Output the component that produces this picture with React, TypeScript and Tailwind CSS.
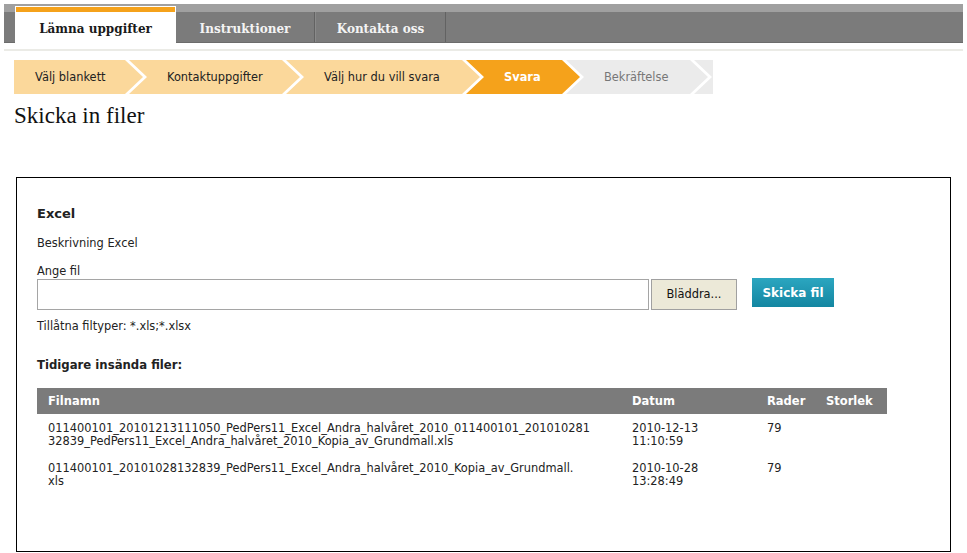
import React from 'react';

const verdana = "font-['DejaVu_Sans',Verdana,sans-serif]";
const georgia = "font-['DejaVu_Serif',Georgia,serif]";

type Step = { label: string; width: string; tone: 'done' | 'active' | 'todo'; first?: boolean };

const steps: Step[] = [
  { label: 'Välj blankett', width: 'w-[129px]', tone: 'done', first: true },
  { label: 'Kontaktuppgifter', width: 'w-[171px]', tone: 'done' },
  { label: 'Välj hur du vill svara', width: 'w-[194px]', tone: 'done' },
  { label: 'Svara', width: 'w-[114px]', tone: 'active' },
  { label: 'Bekräftelse', width: 'w-[142px]', tone: 'todo' },
];

const files = [
  {
    name: [
      '011400101_20101213111050_PedPers11_Excel_Andra_halvåret_2010_011400101_201010281',
      '32839_PedPers11_Excel_Andra_halvåret_2010_Kopia_av_Grundmall.xls',
    ],
    date: ['2010-12-13', '11:10:59'],
    rows: '79',
  },
  {
    name: ['011400101_20101028132839_PedPers11_Excel_Andra_halvåret_2010_Kopia_av_Grundmall.', 'xls'],
    date: ['2010-10-28', '13:28:49'],
    rows: '79',
  },
];

const toneClass = {
  done: 'bg-[#fbd89b] text-[#222]',
  active: 'bg-[#f5a21b] text-white font-bold',
  todo: 'bg-[#ebebeb] text-[#777]',
};

const Breadcrumb: React.FC = () => (
  <div className={`flex ml-[14px] mt-[9px] h-[34px] text-[11.4px] ${verdana}`}>
    {steps.map((s, i) => (
      <div
        key={i}
        className={`${s.width} ${toneClass[s.tone]} h-full flex items-center pt-[1px] shrink-0 ${
          s.first
            ? 'pl-[21px] [clip-path:polygon(0_0,calc(100%-18px)_0,100%_50%,calc(100%-18px)_100%,0_100%)]'
            : '-ml-[14px] pl-[38px] [clip-path:polygon(0_0,calc(100%-18px)_0,100%_50%,calc(100%-18px)_100%,0_100%,18px_50%)]'
        }`}
      >
        {s.label}
      </div>
    ))}
    <div className="-ml-[14px] w-[19px] h-full bg-[#ebebeb] shrink-0 [clip-path:polygon(0_0,100%_0,100%_100%,0_100%,18px_50%)]" />
  </div>
);

const App: React.FC = () => {
  return (
    <div className={`w-[967px] h-[553px] bg-white overflow-hidden ${verdana} text-[#222]`}>
      {/* top tabs */}
      <div className="ml-[4px] mt-[4px] w-[959px] h-[39px] bg-[#7b7b7b] border-t-[8px] border-[#a0a0a0] border-b border-b-[#6c6c6c]">
        <div className={`flex ml-[11px] ${georgia} font-bold text-[12px]`}>
          <div className="-mt-[6px] w-[161px] h-[37px] bg-white flex flex-col">
            <div className="mx-[1px] mt-[1px] h-[5px] bg-[#f5a21b]" />
            <div className="flex-1 flex items-center justify-center pt-[2px] text-[#1a1a1a]">Lämna uppgifter</div>
          </div>
          <div className="w-[139px] h-[30px] flex items-center justify-center pt-[3px] text-[#f4f4f4] border-r border-[#626262]">
            Instruktioner
          </div>
          <div className="w-[131px] h-[30px] flex items-center justify-center pt-[3px] text-[#f4f4f4] border-l border-[#8a8a8a] border-r border-r-[#626262]">
            Kontakta oss
          </div>
        </div>
      </div>
      <div className="ml-[4px] mt-[6px] w-[959px] h-[2px] bg-[#ebebe6]" />

      <Breadcrumb />

      <h1 className="ml-[14px] mt-[8px] h-[28px] leading-[28px] text-[23px] text-[#111] font-['Liberation_Serif',Georgia,serif]">
        Skicka in filer
      </h1>

      {/* upload box */}
      <div className="ml-[16px] mt-[47px] w-[935px] h-[375px] border border-black pl-[20px] pt-[28px]">
        <div className="text-[13px] leading-[16px] font-bold">Excel</div>
        <div className="mt-[14px] text-[11.4px] leading-[14px]">Beskrivning Excel</div>
        <div className="mt-[14px] text-[11.4px] leading-[14px]">Ange fil</div>
        <div className="mt-[1px] flex items-start">
          <div className="w-[612px] h-[31px] border border-[#a5a5a5] bg-white" />
          <button className="ml-[2px] w-[86px] h-[31px] bg-[#ece9d8] border border-[#a0a0a0] text-[11.4px] text-[#111]">
            Bläddra...
          </button>
          <button className="ml-[15px] -mt-[1px] w-[82px] h-[29px] bg-gradient-to-b from-[#2ba6c0] to-[#1386a1] text-white font-bold text-[12px]">
            Skicka fil
          </button>
        </div>
        <div className="mt-[9px] text-[11.4px] leading-[14px]">Tillåtna filtyper: *.xls;*.xlsx</div>
        <div className="mt-[24px] text-[11.7px] leading-[16px] font-bold">Tidigare insända filer:</div>

        <table className="mt-[15px] w-[850px] border-collapse text-[11.4px]">
          <thead>
            <tr className="bg-[#7b7b7b] text-white font-bold text-[11.5px] h-[26px] text-left">
              <th className="w-[584px] pl-[11px] pt-[1px] font-bold">Filnamn</th>
              <th className="w-[135px] pl-[11px] pt-[1px] font-bold">Datum</th>
              <th className="w-[59px] pl-[11px] pt-[1px] font-bold">Rader</th>
              <th className="w-[72px] pl-[11px] pt-[1px] font-bold">Storlek</th>
            </tr>
          </thead>
          <tbody>
            {files.map((f, i) => (
              <tr key={i} className="align-top leading-[13px]">
                <td className="pl-[11px] pt-[8px] pb-[6px] whitespace-nowrap">
                  {f.name[0]}
                  <br />
                  {f.name[1]}
                </td>
                <td className="pl-[11px] pt-[8px] pb-[6px]">
                  {f.date[0]}
                  <br />
                  {f.date[1]}
                </td>
                <td className="pl-[11px] pt-[8px] pb-[6px]">{f.rows}</td>
                <td className="pl-[11px] pt-[8px] pb-[6px]"></td>
              </tr>
            ))}
          </tbody>
        </table>
      </div>
    </div>
  );
};

export default App;
